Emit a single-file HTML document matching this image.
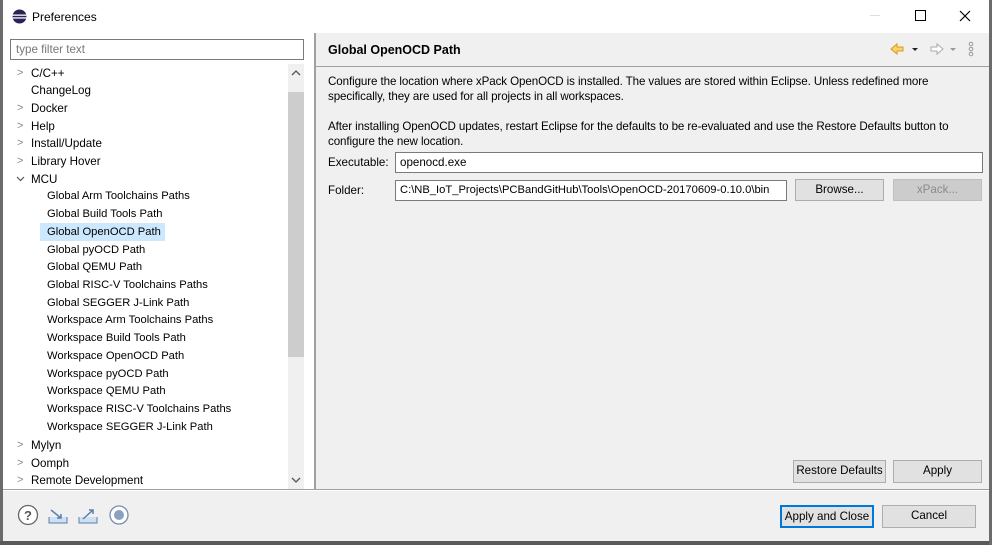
<!DOCTYPE html>
<html><head><meta charset="utf-8"><style>
*{margin:0;padding:0;box-sizing:border-box}
body{width:992px;height:545px;background:#fff;font-family:"Liberation Sans",sans-serif;font-size:11.6px;color:#000;position:relative;overflow:hidden}
.a{position:absolute;white-space:nowrap}
.btn{position:absolute;background:#e1e1e1;border:1px solid #adadad;text-align:center;line-height:20px;font-size:11.6px}
.chev{position:absolute;color:#888;font-size:11px}
.t{font-size:11.2px}
</style></head><body>
<div class="a" style="left:0;top:0;width:992px;height:545px;background:#f0f0f0"></div>
<div class="a" style="left:0;top:0;width:992px;height:33px;background:#fff"></div>
<div class="a" style="left:0;top:0;width:3px;height:545px;background:#6b6b6b"></div>
<div class="a" style="left:0;top:541px;width:992px;height:4px;background:#5a5a5a"></div>
<div class="a" style="left:989px;top:0;width:3px;height:545px;background:#6b6b6b"></div>
<svg class="a" style="left:12px;top:9px" width="15" height="15" viewBox="0 0 15 15"><circle cx="7.5" cy="7.5" r="7" fill="#2c2255"/><rect x="0" y="5.5" width="15" height="1.3" fill="#fff"/><rect x="0" y="8.3" width="15" height="1.3" fill="#fff"/></svg>
<div class="a" style="left:32px;top:10px;font-size:12px">Preferences</div>
<div class="a" style="left:870px;top:15px;width:10px;height:1px;background:#ddd"></div>
<div class="a" style="left:915px;top:10px;width:11px;height:11px;border:1px solid #000"></div>
<svg class="a" style="left:959px;top:10px" width="12" height="12"><path d="M1 1L11 11M11 1L1 11" stroke="#000" stroke-width="1.2"/></svg>
<div class="a" style="left:3px;top:33px;width:311px;height:456px;background:#fff"></div>
<div class="a" style="left:10px;top:39px;width:294px;height:21px;border:1px solid #7a7a7a;background:#fff;color:#777;padding:3px 5px;font-size:11.6px">type filter text</div>
<div class="a" style="left:288px;top:64px;width:16px;height:425px;background:#f0f0f0"></div>
<div class="a" style="left:288px;top:92px;width:16px;height:265px;background:#cdcdcd"></div>
<svg class="a" style="left:291px;top:69px" width="10" height="8"><path d="M1 6L5 2L9 6" stroke="#555" fill="none" stroke-width="1.3"/></svg>
<svg class="a" style="left:291px;top:476px" width="10" height="8"><path d="M1 2L5 6L9 2" stroke="#555" fill="none" stroke-width="1.3"/></svg>
<div class="a" style="left:40px;top:223px;width:125px;height:18px;background:#cce8ff"></div>
<div class="a" style="left:0;top:0;line-height:17.75px">
<div class="a" style="left:31px;top:65px">C/C++</div>
<div class="a" style="left:31px;top:82px">ChangeLog</div>
<div class="a" style="left:31px;top:100px">Docker</div>
<div class="a" style="left:31px;top:118px">Help</div>
<div class="a" style="left:31px;top:135px">Install/Update</div>
<div class="a" style="left:31px;top:153px">Library Hover</div>
<div class="a" style="left:31px;top:171px">MCU</div>
<div class="a t" style="left:47px;top:188px">Global Arm Toolchains Paths</div>
<div class="a t" style="left:47px;top:206px">Global Build Tools Path</div>
<div class="a t" style="left:47px;top:224px">Global OpenOCD Path</div>
<div class="a t" style="left:47px;top:242px">Global pyOCD Path</div>
<div class="a t" style="left:47px;top:259px">Global QEMU Path</div>
<div class="a t" style="left:47px;top:277px">Global RISC-V Toolchains Paths</div>
<div class="a t" style="left:47px;top:295px">Global SEGGER J-Link Path</div>
<div class="a t" style="left:47px;top:312px">Workspace Arm Toolchains Paths</div>
<div class="a t" style="left:47px;top:330px">Workspace Build Tools Path</div>
<div class="a t" style="left:47px;top:348px">Workspace OpenOCD Path</div>
<div class="a t" style="left:47px;top:366px">Workspace pyOCD Path</div>
<div class="a t" style="left:47px;top:383px">Workspace QEMU Path</div>
<div class="a t" style="left:47px;top:401px">Workspace RISC-V Toolchains Paths</div>
<div class="a t" style="left:47px;top:419px">Workspace SEGGER J-Link Path</div>
<div class="a" style="left:31px;top:437px">Mylyn</div>
<div class="a" style="left:31px;top:455px">Oomph</div>
<div class="a" style="left:31px;top:472px">Remote Development</div>
</div>
<div class="chev" style="left:17px;top:67px">&gt;</div>
<div class="chev" style="left:17px;top:102px">&gt;</div>
<div class="chev" style="left:17px;top:120px">&gt;</div>
<div class="chev" style="left:17px;top:137px">&gt;</div>
<div class="chev" style="left:17px;top:155px">&gt;</div>
<svg class="a" style="left:16px;top:176px" width="9" height="6"><path d="M1 1L4.5 4.5L8 1" stroke="#555" fill="none" stroke-width="1.2"/></svg>
<div class="chev" style="left:17px;top:439px">&gt;</div>
<div class="chev" style="left:17px;top:457px">&gt;</div>
<div class="chev" style="left:17px;top:474px">&gt;</div>
<div class="a" style="left:314px;top:33px;width:2px;height:456px;background:#a0a0a0"></div>
<div class="a" style="left:3px;top:489px;width:986px;height:1px;background:#a0a0a0"></div>
<div class="a" style="left:3px;top:490px;width:986px;height:1px;background:#fff"></div>
<div class="a" style="left:328px;top:43px;font-weight:bold;font-size:12.5px">Global OpenOCD Path</div>
<div class="a" style="left:316px;top:66px;width:673px;height:1px;background:#a0a0a0"></div>
<svg class="a" style="left:888px;top:41px" width="90" height="18"><path d="M3 8L9 3V6H15V10H9V13Z" fill="#fbd36b" stroke="#d59b1f"/><path d="M24 7h6l-3 3z" fill="#222"/><path d="M55 8L49 3V6H43V10H49V13Z" fill="#fff" stroke="#aaa"/><path d="M62 7h6l-3 3z" fill="#999"/><circle cx="83" cy="3" r="1.8" fill="none" stroke="#999"/><circle cx="83" cy="8" r="1.8" fill="none" stroke="#999"/><circle cx="83" cy="13" r="1.8" fill="none" stroke="#999"/></svg>
<div class="a" style="left:328px;top:74px;line-height:15px;letter-spacing:-0.1px">Configure the location where xPack OpenOCD is installed. The values are stored within Eclipse. Unless redefined more<br>specifically, they are used for all projects in all workspaces.</div>
<div class="a" style="left:328px;top:119px;line-height:15px;letter-spacing:-0.1px">After installing OpenOCD updates, restart Eclipse for the defaults to be re-evaluated and use the Restore Defaults button to<br>configure the new location.</div>
<div class="a" style="left:328px;top:156px">Executable:</div>
<div class="a" style="left:395px;top:152px;width:588px;height:21px;border:1px solid #7a7a7a;background:#fff;padding:3px 4px">openocd.exe</div>
<div class="a" style="left:328px;top:184px">Folder:</div>
<div class="a" style="left:395px;top:180px;width:392px;height:21px;border:1px solid #7a7a7a;background:#fff;padding:3px 4px;overflow:hidden;font-size:11.2px">C:\NB_IoT_Projects\PCBandGitHub\Tools\OpenOCD-20170609-0.10.0\bin</div>
<div class="btn" style="left:795px;top:179px;width:89px;height:22px">Browse...</div>
<div class="btn" style="left:893px;top:179px;width:89px;height:22px;background:#ccc;border-color:#bfbfbf;color:#8a8a8a">xPack...</div>
<div class="btn" style="left:793px;top:460px;width:93px;height:23px">Restore Defaults</div>
<div class="btn" style="left:893px;top:460px;width:89px;height:23px">Apply</div>
<div class="btn" style="left:780px;top:505px;width:94px;height:23px;border:2px solid #0078d7;line-height:19px">Apply and Close</div>
<div class="btn" style="left:882px;top:505px;width:94px;height:23px">Cancel</div>
<svg class="a" style="left:17px;top:504px" width="116" height="24"><circle cx="11" cy="11" r="9.5" fill="#fff" stroke="#666" stroke-width="1.3"/><text x="11" y="16" font-family="Liberation Sans" font-size="13" font-weight="bold" fill="#555" text-anchor="middle">?</text>
<path d="M32 13V19H50V13" fill="#cfe0f2" stroke="#5a7fb0"/><path d="M34 6L44 14M44 10V14H40" stroke="#5a7fb0" fill="none" stroke-width="1.5"/>
<path d="M62 13V19H80V13" fill="#cfe0f2" stroke="#5a7fb0"/><path d="M66 15L76 6M72 6H76V10" stroke="#5a7fb0" fill="none" stroke-width="1.5"/>
<circle cx="102" cy="11" r="9" fill="#fff" stroke="#7a8db0" stroke-width="1.3"/><circle cx="102" cy="11" r="5" fill="#8aa0c0"/></svg>
</body></html>
